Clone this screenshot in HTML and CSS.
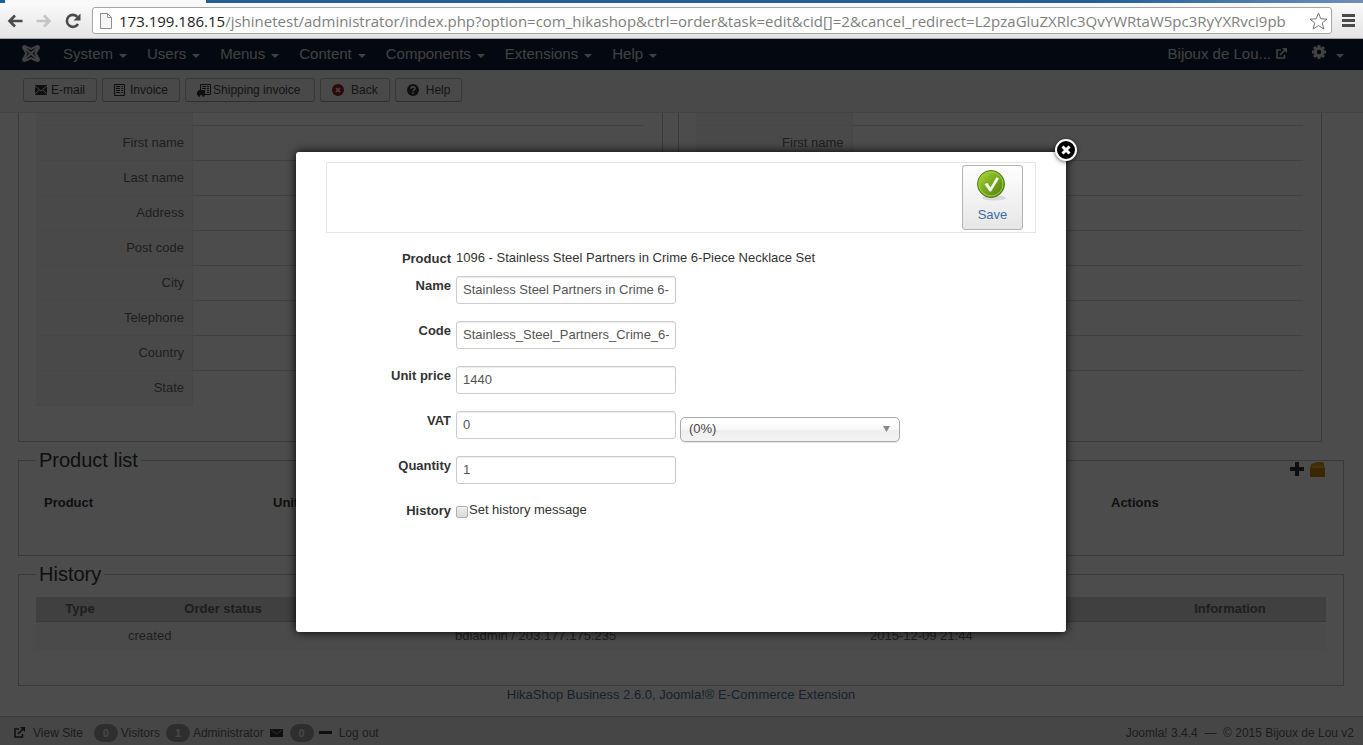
FILE: index.html
```html
<!DOCTYPE html>
<html lang="en">
<head>
    <meta charset="UTF-8">
    <meta name="viewport" content="width=device-width, initial-scale=1.0">
    <title>Bijoux de Lou v2 - Administration</title>
    <link rel="stylesheet" href="styles.css">
</head>
<body>
    <!-- browser bar -->
    <div class="browser">
        <div class="tab-strip"><div class="tab"></div></div>
        <div class="browser-bar">
            <button class="browser-btn" aria-label="Back">
                <svg width="16" height="14" viewBox="0 0 16 14"><path d="M8 1.500L2.500 7L8 12.500M3 7H15.500" fill="none" stroke="#4a4a4a" stroke-width="2.600"/></svg>
            </button>
            <button class="browser-btn" aria-label="Forward">
                <svg width="16" height="14" viewBox="0 0 16 14"><path d="M8 1.500L13.500 7L8 12.500M13 7H0.500" fill="none" stroke="#c4c4c4" stroke-width="2.600"/></svg>
            </button>
            <button class="browser-btn" aria-label="Reload">
                <svg width="16" height="16" viewBox="0 0 16 16"><path d="M13 11A6 6 0 1 1 12.500 4" fill="none" stroke="#4a4a4a" stroke-width="2.600"/><path d="M15.500 0.500V7.500H8.500Z" fill="#4a4a4a"/></svg>
            </button>
            <div class="address">
                <svg class="page-icon" width="12" height="16" viewBox="0 0 12 16"><path d="M0.500 0.500H7.500L11.500 4.500V15.500H0.500ZM7.500 0.500V4.500H11.500" fill="#f6f6f6" stroke="#8d8d8d"/></svg>
                <div class="url" role="textbox" aria-label="Address"><span class="host">173.199.186.15</span>/jshinetest/administrator/index.php?option=com_hikashop&amp;ctrl=order&amp;task=edit&amp;cid[]=2&amp;cancel_redirect=L2pzaGluZXRlc3QvYWRtaW5pc3RyYXRvci9pb</div>
                <svg width="19" height="18" viewBox="0 0 19 18"><path d="M9.500 1L11.800 6.800L18 7.100L13.200 11L14.900 17L9.500 13.600L4.100 17L5.800 11L1 7.100L7.200 6.800Z" fill="#fff" stroke="#777"/></svg>
            </div>
            <button class="browser-btn menu-btn" aria-label="Menu">
                <svg width="13" height="13" viewBox="0 0 13 13"><path d="M0 1.500H13M0 6.500H13M0 11.500H13" stroke="#4a4a4a" stroke-width="3"/></svg>
            </button>
        </div>
    </div>

    <div class="page">
        <nav class="navbar">
            <a href="#" class="logo" aria-label="Joomla">
                <svg width="18" height="17" viewBox="0 0 18 17" fill="none" stroke="#d9d9d9" stroke-width="2.200"><path d="M3 3L15 14M15 3L3 14M4 2C7 2 8 4 9 4S11 2 14 2M4 15C7 15 8 13 9 13S11 15 14 15M2.500 4C2.500 7 4.500 7.500 4.500 8.500S2.500 10 2.500 13M15.500 4C15.500 7 13.500 7.500 13.500 8.500S15.500 10 15.500 13"/><g fill="#d9d9d9" stroke="none"><circle cx="2.600" cy="2.600" r="2.500"/><circle cx="15.400" cy="2.600" r="2.500"/><circle cx="2.600" cy="14.400" r="2.500"/><circle cx="15.400" cy="14.400" r="2.500"/></g></svg>
            </a>
            <a href="#" class="menu">System</a>
            <a href="#" class="menu">Users</a>
            <a href="#" class="menu">Menus</a>
            <a href="#" class="menu">Content</a>
            <a href="#" class="menu">Components</a>
            <a href="#" class="menu">Extensions</a>
            <a href="#" class="menu">Help</a>
            <div class="nav-right">
                <a href="#" class="site-name">Bijoux de Lou...
                    <svg width="11" height="11" viewBox="0 0 11 11" fill="none" stroke="#d9d9d9" stroke-width="1.600"><path d="M5 2H1V10H8.500V7M4 7L9 2"/><path d="M6 0H11V5Z" fill="#d9d9d9" stroke="none"/></svg>
                </a>
                <a href="#" class="menu" aria-label="Settings">
                    <svg width="14" height="17" viewBox="0 0 14 17"><circle cx="7" cy="7" r="3.700" fill="none" stroke="#d9d9d9" stroke-width="3"/><path d="M7 0V3M7 11V14M0 7H3M11 7H14M2 2L4 4M10 10L12 12M12 2L10 4M4 10L2 12" stroke="#d9d9d9" stroke-width="3"/></svg>
                </a>
            </div>
        </nav>

        <div class="subhead">
            <button class="btn">
                <svg width="16" height="10" viewBox="0 0 16 10"><path d="M0 0H12V10H0Z" fill="#333"/><path d="M0 1L6 6L12 1M0 9.500L4 5M12 9.500L8 5" fill="none" stroke="#eee"/></svg>
                E-mail
            </button>
            <button class="btn">
                <svg width="16" height="12" viewBox="0 0 16 12"><path d="M0.500 0.500H10.500V11.500H0.500Z" fill="#eee" stroke="#333"/><path d="M2 2.500H6M2 4.500H6M2 6.500H6M2 8.500H6M7.500 2.500H9M7.500 4.500H9M7.500 6.500H9M7.500 8.500H9" stroke="#333"/></svg>
                Invoice
            </button>
            <button class="btn btn-wide">
                <svg width="16" height="13" viewBox="0 0 16 13"><path d="M3.500 0.500H13.500V10.500H3.500Z" fill="#eee" stroke="#333"/><path d="M5 2.500H9M5 4.500H9M10 2.500H12M10 4.500H12M10 6.500H12M10 8.500H12" stroke="#333"/><path d="M0 8L2 6H8V11H0Z" fill="#333"/><circle cx="2" cy="11.500" r="1.200" fill="#333"/><circle cx="6.500" cy="11.500" r="1.200" fill="#333"/></svg>
                Shipping invoice
            </button>
            <button class="btn">
                <svg width="19" height="12" viewBox="0 0 19 12"><circle cx="6" cy="6" r="6" fill="#8c2424"/><path d="M4 4L8 8M8 4L4 8" stroke="#eee" stroke-width="1.600"/></svg>
                Back
            </button>
            <button class="btn">
                <svg width="19" height="12" viewBox="0 0 19 12"><circle cx="6" cy="6" r="6" fill="#333"/><path d="M4 4.700C4 2.300 8 2.300 8 4.500C8 5.800 6 5.800 6 7.200M6 8.200V9.700" fill="none" stroke="#eee" stroke-width="1.600"/></svg>
                Help
            </button>
        </div>

        <main class="content">
            <div class="addresses">
                <div class="address-box">
                    <table class="details">
                        <tr class="cut"><th></th><td></td></tr>
                        <tr><th>First name</th><td></td></tr>
                        <tr><th>Last name</th><td></td></tr>
                        <tr><th>Address</th><td></td></tr>
                        <tr><th>Post code</th><td></td></tr>
                        <tr><th>City</th><td></td></tr>
                        <tr><th>Telephone</th><td></td></tr>
                        <tr><th>Country</th><td></td></tr>
                        <tr><th>State</th><td></td></tr>
                    </table>
                </div>
                <div class="address-box">
                    <table class="details">
                        <tr class="cut"><th></th><td></td></tr>
                        <tr><th>First name</th><td></td></tr>
                        <tr><th>Last name</th><td></td></tr>
                        <tr><th>Address</th><td></td></tr>
                        <tr><th>Post code</th><td></td></tr>
                        <tr><th>City</th><td></td></tr>
                        <tr><th>Telephone</th><td></td></tr>
                        <tr><th>Country</th><td></td></tr>
                        <tr><th>State</th><td></td></tr>
                    </table>
                </div>
            </div>

            <fieldset class="products">
                <legend>Product list</legend>
                <div class="product-tools">
                    <a href="#" aria-label="Add"><svg width="14" height="14" viewBox="0 0 14 14"><path d="M7 0V14M0 7H14" stroke="#333" stroke-width="4"/></svg></a>
                    <a href="#" aria-label="Add existing product"><svg width="15" height="16" viewBox="0 0 15 16"><path d="M1 3L5 2L6 1H13L14 3V15H1Z" fill="#d49a1c"/><path d="M0 5H15V16H0Z" fill="#c98500"/><path d="M0 5H15V7H0Z" fill="#e0ad3c"/></svg></a>
                </div>
                <table class="product-table">
                    <tr>
                        <th class="col-product">Product</th>
                        <th>Unit price</th>
                        <th class="col-actions">Actions</th>
                    </tr>
                </table>
            </fieldset>

            <fieldset class="history">
                <legend>History</legend>
                <table class="history-table">
                    <colgroup>
                        <col class="col-type"><col class="col-status"><col class="col-reason"><col><col class="col-date"><col class="col-info">
                    </colgroup>
                    <thead>
                        <tr><th>Type</th><th>Order status</th><th></th><th></th><th></th><th>Information</th></tr>
                    </thead>
                    <tbody>
                        <tr><td></td><td>created</td><td></td><td>bdladmin / 203.177.175.235</td><td>2015-12-09 21:44</td><td></td></tr>
                    </tbody>
                </table>
            </fieldset>
            <p class="credit"><a href="#">HikaShop Business 2.6.0, Joomla!® E-Commerce Extension</a></p>
        </main>

        <footer class="status">
            <svg width="12" height="12" viewBox="0 0 12 12" fill="none" stroke="#333" stroke-width="1.600"><path d="M6 2H2V10H9.500V7M5 7L10 2"/><path d="M7 0H12V5Z" fill="#333" stroke="none"/></svg>
            <a href="#" class="view-site">View Site</a>
            <span class="badge">0</span>
            <span class="status-text">Visitors</span>
            <span class="badge">1</span>
            <span class="status-text">Administrator</span>
            <svg class="mail" width="13" height="8" viewBox="0 0 13 8"><path d="M0 0H13V8H0Z" fill="#333"/><path d="M1 1L6.500 5L12 1" fill="none" stroke="#999"/></svg>
            <span class="badge">0</span>
            <svg width="13" height="3" viewBox="0 0 13 3"><path d="M0 0H13V3H0Z" fill="#333"/></svg>
            <a href="#" class="logout">Log out</a>
            <span class="copyright">Joomla! 3.4.4 &nbsp;—&nbsp; © 2015 Bijoux de Lou v2</span>
        </footer>

        <div class="overlay">
            <div class="modal" role="dialog" aria-label="Product">
                <button class="close" aria-label="Close">
                    <svg width="26" height="26" viewBox="0 0 26 26"><circle cx="13" cy="13" r="10" fill="#000" stroke="#fff" stroke-width="2"/><path d="M9.500 9.500L16.500 16.500M16.500 9.500L9.500 16.500" stroke="#fff" stroke-width="3"/></svg>
                </button>
                <div class="toolbar">
                    <button class="save">
                        <svg width="32" height="34" viewBox="2 0 32 34">
                            <defs>
                                <linearGradient id="ball" x1="0" y1="0" x2="1" y2="1">
                                    <stop offset="0" stop-color="#b5dc3c"/>
                                    <stop offset="0.500" stop-color="#76a81c"/>
                                    <stop offset="1" stop-color="#4f7c10"/>
                                </linearGradient>
                            </defs>
                            <ellipse cx="19" cy="30" rx="12" ry="2.500" fill="#d9d9d9"/>
                            <circle cx="16" cy="16" r="13.500" fill="url(#ball)" stroke="#4c7a18"/>
                            <circle cx="16" cy="16" r="12" fill="none" stroke="#a4cf45"/>
                            <path d="M9.500 16L12.500 15L15.500 19.500L21.500 9L24 10.500L16 23.500H14.500Z" fill="#f6faea"/>
                        </svg>
                        Save
                    </button>
                </div>
                <form class="form">
                    <div class="row row-text">
                        <span class="label">Product</span>
                        <span>1096 - Stainless Steel Partners in Crime 6-Piece Necklace Set</span>
                    </div>
                    <div class="row">
                        <label class="label" for="name">Name</label>
                        <input type="text" id="name" value="Stainless Steel Partners in Crime 6-Piece Necklace Set">
                    </div>
                    <div class="row">
                        <label class="label" for="code">Code</label>
                        <input type="text" id="code" value="Stainless_Steel_Partners_Crime_6-Piece_Necklace_Set">
                    </div>
                    <div class="row">
                        <label class="label" for="price">Unit price</label>
                        <input type="text" id="price" value="1440">
                    </div>
                    <div class="row">
                        <label class="label" for="vat">VAT</label>
                        <input type="text" id="vat" value="0">
                        <select aria-label="Tax rate"><option>(0%)</option></select>
                    </div>
                    <div class="row">
                        <label class="label" for="quantity">Quantity</label>
                        <input type="text" id="quantity" value="1">
                    </div>
                    <div class="row">
                        <span class="label">History</span>
                        <label class="check"><input type="checkbox">Set history message</label>
                    </div>
                </form>
            </div>
        </div>
    </div>
</body>
</html>
```

FILE: styles.css
```css
* {
    box-sizing: border-box;
}

body {
    margin: 0;
    min-height: 100vh;
    display: flex;
    flex-direction: column;
    font-family: "Liberation Sans", Arial, sans-serif;
    font-size: 13px;
    line-height: 18px;
    color: #333;
    background: #fff;
}

button {
    font-family: inherit;
    cursor: pointer;
}

a {
    text-decoration: none;
}

svg {
    flex-shrink: 0;
}

table {
    width: 100%;
    border-collapse: separate;
    border-spacing: 0;
}

th, td {
    padding: 0;
}

/* Browser */
.tab-strip {
    height: 3px;
    padding-left: 5px;
    background: linear-gradient(to right, #1e5f99 80%, #6d8fb8);
}

.tab {
    width: 201px;
    height: 3px;
    background: #f9f9f9;
}

.browser-bar {
    display: flex;
    align-items: center;
    height: 36px;
    padding: 0 7px;
    border-bottom: 1px solid #a8a8a8;
    background: linear-gradient(#fafafa, #e4e4e4);
}

.browser-btn {
    display: flex;
    width: 16px;
    margin-right: 13px;
    padding: 0;
    border: 0;
    background: none;
}

.address {
    flex: 1;
    min-width: 0;
    display: flex;
    align-items: center;
    height: 27px;
    margin-left: -2px;
    padding: 0 3px 0 7px;
    border: 1px solid #a6a6a6;
    border-radius: 3px;
    background: #fff;
}

.url {
    flex: 1;
    margin-left: 7px;
    overflow: hidden;
    white-space: nowrap;
    font-family: "Open Sans", "Noto Sans", sans-serif;
    font-size: 15px;
    line-height: 24px;
    color: #808080;
}

.host {
    color: #222;
}

.menu-btn {
    width: 14px;
    margin: 0 0 0 10px;
}

/* Page */
.page {
    position: relative;
    flex: 1;
    display: flex;
    flex-direction: column;
}

.navbar {
    display: flex;
    align-items: center;
    gap: 20px;
    height: 31px;
    padding: 0 19px 2px 22px;
    background: #10213a;
    font-size: 15px;
}

.navbar a {
    display: flex;
    align-items: center;
    color: #d9d9d9;
}

.logo {
    margin-right: 3px;
}

.menu::after {
    content: "";
    margin: 4px 0 0 6px;
    border: 4px solid transparent;
    border-top-color: #d9d9d9;
    border-bottom: 0;
}

.nav-right {
    display: flex;
    gap: 25px;
    margin-left: auto;
}

.site-name {
    gap: 5px;
}

.nav-right .menu {
    gap: 4px;
}

.subhead {
    display: flex;
    align-items: center;
    gap: 5px;
    height: 43px;
    padding: 0 23px 2px;
    border-bottom: 1px solid #e0e0e0;
    background: #f5f5f5;
}

.btn {
    display: flex;
    align-items: center;
    height: 24px;
    padding: 0 11px;
    border: 1px solid #bbb;
    border-bottom-color: #a2a2a2;
    border-radius: 3px;
    background: #f5f5f5;
    font-size: 12px;
    color: #444;
}

.btn-wide {
    min-width: 130px;
}

.content {
    flex: 1;
    padding: 0 19px 0 18px;
}

.addresses {
    display: grid;
    grid-template-columns: 1fr 1fr;
    gap: 15px;
    margin-right: 22px;
}

.address-box {
    padding: 0 18px 35px 17px;
    border: 1px solid #c0c0c0;
    border-top: 0;
}

.details {
    table-layout: fixed;
}

.details th {
    width: 157px;
    height: 35px;
    padding: 0 8px 0 0;
    border-right: 1px solid #e9e9e9;
    border-bottom: 1px solid #e9e9e9;
    background: #f6f6f6;
    color: #666;
    font-weight: normal;
    text-align: right;
}

.details td {
    border-bottom: 1px solid #d8d8d8;
}

.details .cut th {
    height: 13px;
}

.details tr:last-child td {
    border-bottom: 0;
}

fieldset {
    margin: 8px 0 0;
    padding: 0 17px;
    border: 1px solid #c0c0c0;
}

legend {
    padding: 0 3px;
    font-size: 20px;
    line-height: 20px;
}

.products {
    padding-bottom: 43px;
}

.product-tools {
    display: flex;
    justify-content: flex-end;
    gap: 6px;
    height: 16px;
    margin: -9px 1px 17px;
}

.product-tools a {
    display: flex;
    align-items: center;
}

.product-table th {
    padding: 0 8px;
    text-align: left;
}

.product-table .col-product {
    width: 229px;
}

.product-table .col-actions {
    width: 223px;
}

.history {
    padding-top: 13px;
    padding-bottom: 35px;
}

.history-table {
    table-layout: fixed;
}

.col-type {
    width: 88px;
}

.col-status {
    width: 198px;
}

.col-reason {
    width: 129px;
}

.col-date {
    width: 268px;
}

.col-info {
    width: 192px;
}

.history-table th {
    height: 25px;
    border-bottom: 1px solid #bbb;
    background: #d5d5d5;
    color: #666;
}

.history-table td {
    height: 28px;
    padding: 0 4px;
    background: #f9f9f9;
    color: #666;
}

.credit {
    margin: 0 0 12px;
    text-align: center;
}

.credit a {
    color: #4a6f96;
}

.status {
    display: flex;
    align-items: center;
    height: 29px;
    padding: 3px 9px 0 13px;
    border-top: 1px solid #c8c8c8;
    background: #ebebeb;
    font-size: 12px;
    color: #626262;
}

.status a {
    color: #626262;
}

.view-site {
    margin: 0 11px 0 8px;
}

.badge {
    width: 24px;
    border-radius: 9px;
    background: #999;
    color: #ebebeb;
    font-size: 11px;
    font-weight: bold;
    text-align: center;
}

.status-text {
    margin: 0 6px 0 3px;
}

.mail {
    margin-right: 7px;
}

.badge + svg {
    margin-left: 5px;
}

.logout {
    margin-left: 7px;
}

.copyright {
    margin-left: auto;
}

/* Popup */
.overlay {
    position: absolute;
    inset: 0;
    display: flex;
    align-items: center;
    justify-content: center;
    padding: 0 1px 1px 0;
    background: rgba(0, 0, 0, 0.7);
}

.modal {
    position: relative;
    width: 770px;
    min-height: 480px;
    padding: 10px 30px;
    border-radius: 3px;
    background: #fff;
    box-shadow: 0 0 10px #000;
}

.close {
    position: absolute;
    top: -15px;
    right: -13px;
    display: flex;
    padding: 0;
    border: 0;
    border-radius: 50%;
    background: none;
    filter: drop-shadow(0 1px 2px rgba(0, 0, 0, 0.6));
}

.toolbar {
    display: flex;
    justify-content: flex-end;
    padding: 2px 12px;
    border: 1px solid #e6e6e6;
}

.save {
    display: flex;
    flex-direction: column;
    align-items: center;
    width: 61px;
    height: 65px;
    padding: 2px 0 0;
    border: 1px solid #b3b3b3;
    border-radius: 3px;
    background: linear-gradient(#fff, #e6e6e6);
    color: #3a6ea5;
    font-size: 13px;
    line-height: 26px;
}

.form {
    display: flex;
    flex-direction: column;
    gap: 17px;
    padding-top: 16px;
}

.row {
    display: flex;
    align-items: flex-start;
    height: 28px;
}

.row-text {
    height: 18px;
    margin-bottom: -8px;
}

.label {
    width: 125px;
    margin-right: 5px;
    padding-top: 1px;
    font-weight: bold;
    text-align: right;
}

.row input[type="text"] {
    width: 220px;
    height: 28px;
    padding: 0 6px;
    border: 1px solid #ccc;
    border-radius: 3px;
    box-shadow: inset 0 1px 1px rgba(0, 0, 0, 0.075);
    font: inherit;
    color: #555;
}

.row select {
    appearance: none;
    width: 220px;
    height: 25px;
    margin: 6px 0 0 4px;
    padding: 0 8px;
    border: 1px solid #aaa;
    border-radius: 5px;
    background:
        url("data:image/svg+xml,%3Csvg xmlns='http://www.w3.org/2000/svg' width='7' height='6'%3E%3Cpath d='M0 0H7L3.5 6Z' fill='%23888'/%3E%3C/svg%3E") right 9px center no-repeat,
        linear-gradient(#fff 20%, #f6f6f6 50%, #eee 52%, #f4f4f4);
    box-shadow: 0 1px 1px rgba(0, 0, 0, 0.1);
    font: inherit;
    color: #444;
}

.check {
    display: flex;
    align-items: flex-start;
}

.check input {
    appearance: none;
    width: 12px;
    height: 12px;
    margin: 5px 1px 0 0;
    border: 1px solid #b0b0b0;
    border-radius: 2px;
    background: linear-gradient(#f0f0f0, #d9d9d9);
}
```
